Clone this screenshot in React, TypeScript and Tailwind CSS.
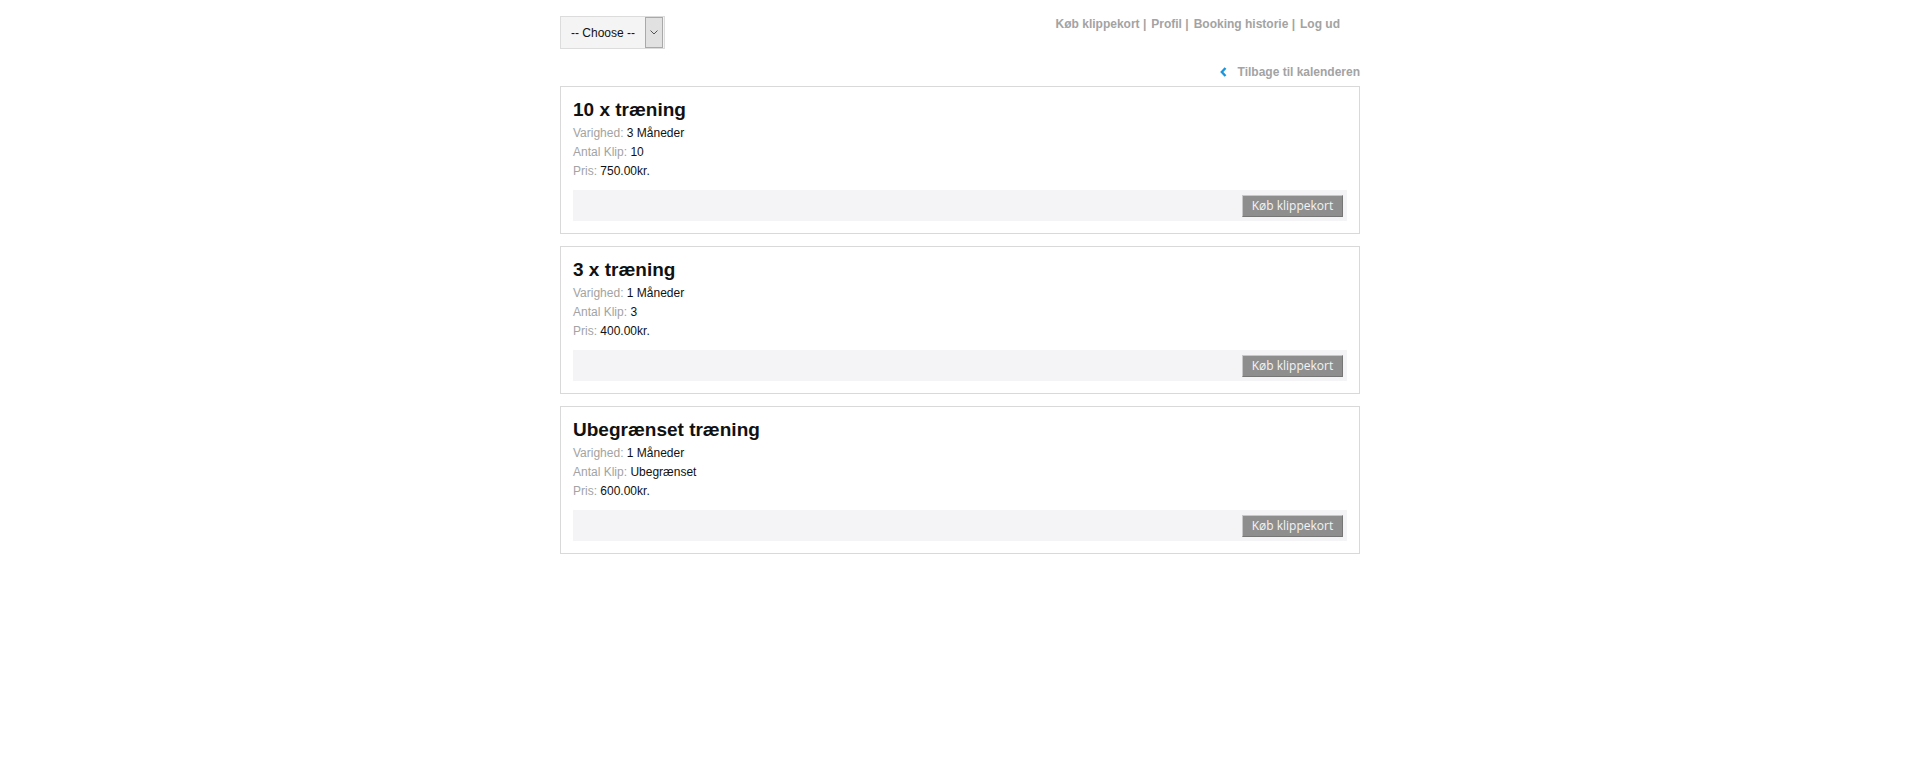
import React from 'react'

interface Card {
  title: string
  duration: string
  clips: string
  price: string
}

const CARDS: Card[] = [
  { title: '10 x træning', duration: '3 Måneder', clips: '10', price: '750.00kr.' },
  { title: '3 x træning', duration: '1 Måneder', clips: '3', price: '400.00kr.' },
  { title: 'Ubegrænset træning', duration: '1 Måneder', clips: 'Ubegrænset', price: '600.00kr.' },
]

const NAV = ['Køb klippekort', 'Profil', 'Booking historie', 'Log ud']

function ChooseSelect() {
  return (
    <div className="flex h-[33px] w-[105px] items-center border border-[#dcdcdc] bg-[#f4f4f4] pl-[10px] pr-px">
      <span className="flex-1 text-xs leading-[14px] text-[#111]">-- Choose --</span>
      <span className="flex h-[31px] w-[18px] items-center justify-center border border-[#a9a9a9] bg-[#e1e1e1]">
        <svg width="8" height="5" viewBox="0 0 8 5" fill="none">
          <polyline points="0.5,0.5 4,4 7.5,0.5" stroke="#555" strokeWidth="1" />
        </svg>
      </span>
    </div>
  )
}

function PlanCard({ card }: { card: Card }) {
  return (
    <div className="border border-[#d9d9d9] bg-white px-3 pt-[11px] pb-3">
      <h2 className="text-[19px] font-bold leading-[24px] text-[#111]">{card.title}</h2>
      <div className="mt-[2px] text-xs leading-[19px]">
        <div>
          <span className="text-[#a3a3a3]">Varighed: </span>
          <span className="text-[#111]">{card.duration}</span>
        </div>
        <div>
          <span className="text-[#a3a3a3]">Antal Klip: </span>
          <span className="text-[#111]">{card.clips}</span>
        </div>
        <div>
          <span className="text-[#a3a3a3]">Pris: </span>
          <span className="text-[#111]">{card.price}</span>
        </div>
      </div>
      <div className="mt-[9px] flex h-[31px] items-start justify-end bg-[#f4f4f6] pt-[5px] pr-1">
        <button className="h-[22px] w-[101px] border border-t-[#c8c8c8] border-l-[#c8c8c8] border-r-[#767676] border-b-[#767676] bg-[#8e8e8e] font-['Open_Sans',sans-serif] text-xs leading-[20px] text-[#f4f4f4]">
          Køb klippekort
        </button>
      </div>
    </div>
  )
}

export default function App() {
  return (
    <div className="min-h-screen bg-white font-['Liberation_Sans',Arial,sans-serif]">
      <div className="mx-auto w-[800px] pt-4">
        {/* Header */}
        <div className="flex items-start justify-between">
          <ChooseSelect />
          <nav className="pt-px pr-5 text-xs font-bold leading-[14px] text-[#a3a3a3]">
            {NAV.map((item, i) => (
              <span key={item}>
                <a href="#" className={i > 0 ? 'ml-[5px]' : ''}>
                  {item}
                </a>
                {i < NAV.length - 1 && ' |'}
              </span>
            ))}
          </nav>
        </div>

        {/* Back link */}
        <div className="mt-4 flex items-center justify-end gap-[11px] text-xs font-bold leading-[14px] text-[#a3a3a3]">
          <svg width="7" height="10" viewBox="0 0 7 10" fill="none">
            <polyline points="5.5,1 1.8,5 5.5,9" stroke="#1a96dc" strokeWidth="2.4" />
          </svg>
          <a href="#">Tilbage til kalenderen</a>
        </div>

        {/* Cards */}
        <div className="mt-[7px] flex flex-col gap-3">
          {CARDS.map((c) => (
            <PlanCard key={c.title} card={c} />
          ))}
        </div>
      </div>
    </div>
  )
}
